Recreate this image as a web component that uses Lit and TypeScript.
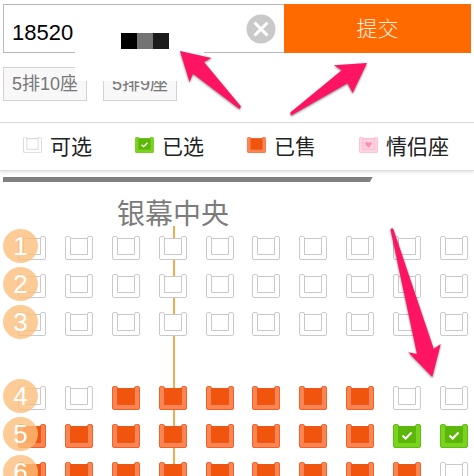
import { LitElement, html, css, svg } from "lit";
import { customElement, property, state } from "lit/decorators.js";

type SeatKind = "free" | "picked" | "sold" | "couple";

const KIND_NAMES: Record<SeatKind, string> = {
  free: "可选",
  picked: "已选",
  sold: "已售",
  couple: "情侣座",
};

const LEGEND: SeatKind[] = ["free", "picked", "sold", "couple"];

// One letter per seat: f = free, s = sold, p = picked. An empty string is the aisle.
const PLAN = [
  "ffffffffff",
  "ffffffffff",
  "ffffffffff",
  "",
  "ffssssssff",
  "sssssssspp",
  "sssssssssf",
];

const KIND_BY_LETTER: Record<string, SeatKind> = { f: "free", s: "sold", p: "picked" };

@customElement("seat-icon")
export class SeatIcon extends LitElement {
  @property({ reflect: true }) kind: SeatKind = "free";

  static styles = css`
    :host {
      display: block;
      --edge: #c9c9c9;
      --arm: #ffffff;
      --cushion: #ffffff;
      --inner: #c9c9c9;
    }
    :host([kind="picked"]) {
      --edge: #62bd10;
      --arm: #78d41c;
      --cushion: #5cb70a;
      --inner: #5cb70a;
    }
    :host([kind="sold"]) {
      --edge: #ef622a;
      --arm: #ff8452;
      --cushion: #f0540d;
      --inner: #e8571c;
    }
    :host([kind="couple"]) {
      --edge: #ffafc6;
      --arm: #ffd3df;
      --cushion: #ffd3df;
      --inner: #ffafc6;
    }
    svg {
      display: block;
      width: 100%;
      height: 100%;
    }
    .frame {
      fill: var(--arm);
      stroke: var(--edge);
    }
    .cushion {
      fill: var(--cushion);
      stroke: var(--inner);
    }
    .tick {
      fill: none;
      stroke: #ffffff;
      stroke-width: 2;
    }
    .heart {
      fill: #ff8fb0;
    }
  `;

  render() {
    return html`<svg viewBox="0 0 28 24" aria-hidden="true">
      <path
        class="frame"
        d="M.5 2Q.5.5 2 .5H3.800Q5.500.5 5.500 2V2.500H22.500V2Q22.500.5 24.200.5H26Q27.500.5 27.500 2V22Q27.500 23.500 26 23.500H2Q.5 23.500.5 22Z"
      />
      <path class="cushion" d="M5.500 2.500H22.500V18.500H5.500Z" />
      ${this.kind === "picked"
        ? svg`<path class="tick" d="M9.5 11.5L12.7 14.5L18.5 8.5" />`
        : ""}
      ${this.kind === "couple"
        ? svg`<path class="heart" d="M14 16L9.5 11.5C7.5 8 12 6 14 9C16 6 20.500 8 18.500 11.5Z" />`
        : ""}
    </svg>`;
  }
}

@customElement("app-root")
export class AppRoot extends LitElement {
  @state() private phone = "18520";

  static styles = css`
    :host {
      display: block;
      position: relative;
      height: 100vh;
      overflow: hidden;
      background: #ffffff;
      color: #222222;
      font-family: "Liberation Sans", "Noto Sans CJK SC", sans-serif;
    }
    button {
      margin: 0;
      padding: 0;
      border: 0;
      background: none;
      font: inherit;
    }
    .order {
      display: grid;
      grid-template-columns: 3fr 2fr;
      height: 49px;
      padding: 4px 3px 0;
    }
    .field {
      position: relative;
      min-width: 0;
      display: flex;
      align-items: center;
      box-sizing: border-box;
      padding: 0 8px;
      border: 1px solid #b9b9b9;
      border-right: 0;
    }
    .phone {
      flex: 1;
      min-width: 0;
      height: 38px;
      margin: 8px 0 0;
      padding: 0;
      border: 0;
      outline: 0;
      background: none;
      color: #000000;
      font: 22px "Liberation Sans", sans-serif;
    }
    .clear,
    .clear svg {
      display: block;
      width: 30px;
      height: 30px;
    }
    .submit {
      padding-bottom: 4px;
      background: #ff6a00;
      color: #fff0e4;
      font-size: 21px;
      font-weight: 300;
    }
    .mask {
      position: absolute;
      top: 15px;
      left: 71px;
      width: 129px;
      height: 61px;
      z-index: 1;
      background: #ffffff;
    }
    .blocks {
      display: flex;
      margin: 13px 0 0 46px;
    }
    .block {
      width: 16px;
      height: 16px;
      background: #000000;
    }
    .block.mid {
      background: #737373;
    }
    .block.dark {
      background: #1b1b1b;
    }
    .chips {
      display: flex;
      gap: 16px;
      padding: 14px 3px 21px;
    }
    .chip {
      height: 34px;
      padding: 0 8px;
      box-sizing: border-box;
      border: 1px solid #d2d2d2;
      background: #f8f8f8;
      color: #777777;
      font-size: 18px;
      line-height: 32px;
    }
    .legend {
      display: grid;
      grid-template-columns: repeat(4, 1fr);
      align-items: center;
      height: 44px;
      margin: 0;
      padding: 0 3px 3px 23px;
      border-top: 1px solid #d8d8d8;
      border-bottom: 1px solid #dcdcdc;
      box-shadow: 0 2px 3px #e8e8e8;
      list-style: none;
      font-size: 21px;
    }
    .legend-item {
      display: flex;
      align-items: center;
      gap: 8px;
      white-space: nowrap;
    }
    .legend-icon {
      width: 19px;
      height: 16px;
    }
    .screen {
      width: 78%;
      height: 5px;
      margin: 6px 0 0 3px;
      background: #808080;
      clip-path: polygon(0 0, 100% 0, calc(100% - 3px) 100%, 0 100%);
    }
    .hall {
      position: relative;
      padding-top: 19px;
    }
    .hall-title {
      margin: 0 0 7px 117px;
      color: #7c7c7c;
      font-size: 28px;
      font-weight: 400;
      line-height: 28px;
    }
    .axis {
      position: absolute;
      top: 44px;
      bottom: 0;
      left: 173px;
      width: 2px;
      background: #f7a94e;
    }
    .rows {
      display: grid;
      gap: 14px;
    }
    .row {
      position: relative;
      display: flex;
      justify-content: space-between;
      padding: 0 6px 0 18px;
    }
    .aisle {
      height: 22px;
    }
    .seat {
      width: 28px;
      height: 24px;
    }
    .seat-icon {
      width: 28px;
      height: 24px;
    }
    .badge {
      position: absolute;
      top: -7px;
      left: 3px;
      width: 35px;
      height: 34px;
      border-radius: 50%;
      background: rgba(252, 190, 122, 0.8);
      color: #ffffff;
      font-size: 26px;
      line-height: 34px;
      text-align: center;
    }
    .pointers {
      position: absolute;
      top: 0;
      left: 0;
      width: 474px;
      height: 476px;
      z-index: 2;
      pointer-events: none;
      fill: #ff1464;
      filter: drop-shadow(0 1px 1px rgba(0, 0, 0, 0.5));
    }
  `;

  private onInput(e: Event) {
    this.phone = (e.target as HTMLInputElement).value;
  }

  private renderRow(letters: string, label: number) {
    return html`<div class="row">
      ${[...letters].map((l, i) => {
        const kind = KIND_BY_LETTER[l];
        return html`<button
          class="seat"
          type="button"
          aria-label="${label}排${i + 1}座 ${KIND_NAMES[kind]}"
          ?disabled=${kind === "sold"}
        >
          <seat-icon class="seat-icon" kind=${kind}></seat-icon>
        </button>`;
      })}
      <span class="badge">${label}</span>
    </div>`;
  }

  render() {
    let label = 0;
    return html`
      <form class="order" @submit=${(e: Event) => e.preventDefault()}>
        <div class="field">
          <input
            class="phone"
            type="tel"
            aria-label="手机号"
            .value=${this.phone}
            @input=${this.onInput}
          />
          <button class="clear" type="button" aria-label="清除" @click=${() => (this.phone = "")}>
            <svg viewBox="0 0 30 30" aria-hidden="true">
              <circle cx="15" cy="15" r="14.500" fill="#c9c9c9" />
              <path d="M8.500 8.500L21.500 21.500M21.500 8.500L8.500 21.500" stroke="#fff" stroke-width="3" />
            </svg>
          </button>
          <div class="mask">
            <div class="blocks">
              <span class="block"></span><span class="block mid"></span><span class="block dark"></span>
            </div>
          </div>
        </div>
        <button class="submit" type="submit">提交</button>
      </form>
      <div class="chips">
        <button class="chip" type="button">5排10座</button>
        <button class="chip" type="button">5排9座</button>
      </div>
      <ul class="legend">
        ${LEGEND.map(
          (kind) => html`<li class="legend-item">
            <seat-icon class="legend-icon" kind=${kind}></seat-icon>${KIND_NAMES[kind]}
          </li>`
        )}
      </ul>
      <div class="screen"></div>
      <main class="hall">
        <h1 class="hall-title">银幕中央</h1>
        <div class="axis"></div>
        <div class="rows">
          ${PLAN.map((letters) =>
            letters ? this.renderRow(letters, ++label) : html`<div class="aisle"></div>`
          )}
        </div>
      </main>
      <svg class="pointers" viewBox="0 0 474 476" aria-hidden="true">
        <path d="M180 51L211.500 58L204 62L241 106.500L239.500 109L193 73.700L189.500 82Z" />
        <path d="M367 63L334 65.300L341.700 70.300L290.300 112.500L291 115.500L347.500 83.300L352.700 93Z" />
        <path d="M390.500 229.500Q392 227 393.500 229.500L433.700 348.700L440.700 344L432.300 377L408.300 352.300L417 354Z" />
      </svg>
    `;
  }
}
